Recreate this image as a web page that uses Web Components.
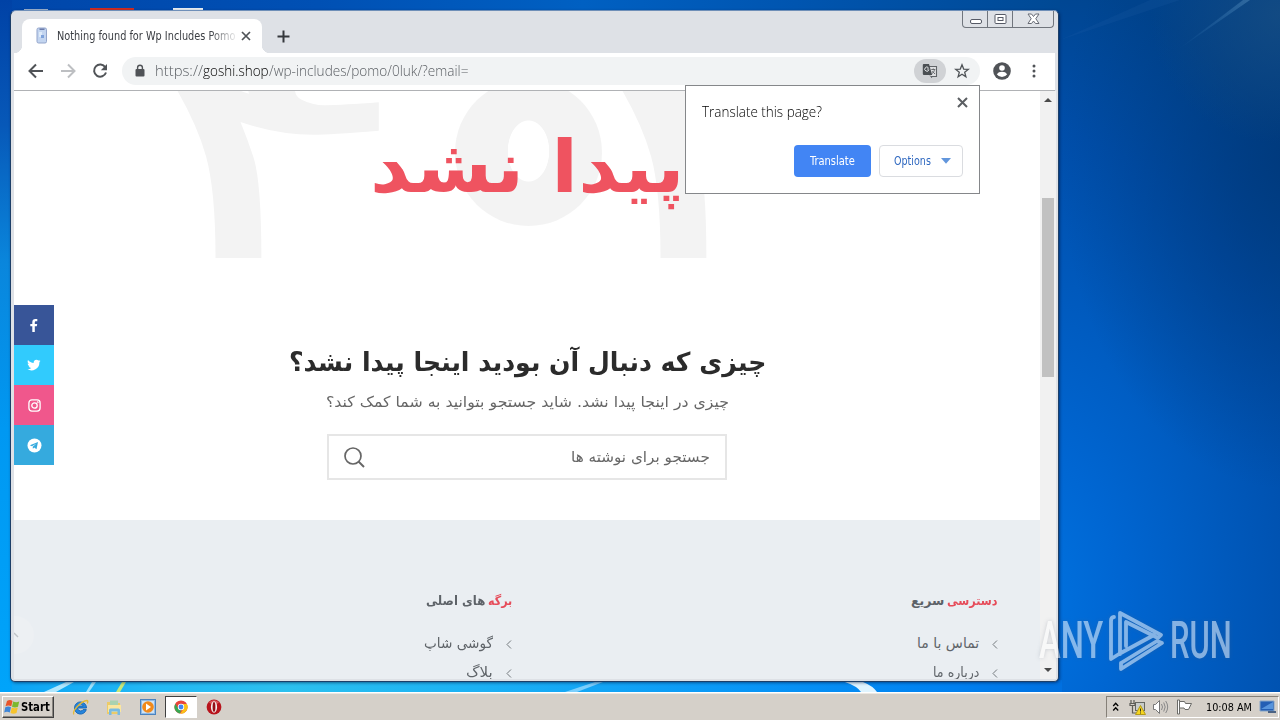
<!DOCTYPE html>
<html lang="en">
<head>
<meta charset="utf-8">
<title>Desktop</title>
<style>
  html, body {
    margin: 0;
    width: 1280px;
    height: 720px;
    overflow: hidden;
    font-family: "DejaVu Sans Condensed", "DejaVu Sans", sans-serif;
  }
</style>
</head>
<body>
<desktop-shell>
  <browser-window>
    <browser-tab slot="tabs" label="Nothing found for Wp Includes Pomo"></browser-tab>
    <address-bar slot="toolbar"></address-bar>
    <shop-page slot="page"></shop-page>
    <translate-bubble slot="bubble"></translate-bubble>
  </browser-window>
  <run-watermark slot="overlay"></run-watermark>
  <task-bar slot="taskbar"></task-bar>
</desktop-shell>

<script>
class DesktopShell extends HTMLElement {
  constructor() {
    super();
    this.attachShadow({ mode: "open" }).innerHTML = `
      <style>
        :host {
          display: grid;
          grid-template-rows: 692px 28px;
          position: relative;
          width: 1280px;
          height: 720px;
          overflow: hidden;
        }
        .wall {
          position: relative;
          overflow: hidden;
          background:
            linear-gradient(180deg, #0042a6 0, #0758b8 18%, #0a86dc 38%, #0098f2 62%, #00a4fa 100%) left / 12px 100% no-repeat,
            linear-gradient(90deg, #0046aa 0, #0050b4 30%, #0060c2 55%, #0055b0 75%, #004994 100%) left top / 1060px 12px no-repeat,
            linear-gradient(90deg, #0aa2f4 0, #22b8f4 14%, #2cc0ee 27%, #1cb2f4 44%, #0a98f6 68%, #0080f0 90%, #0070e0 100%) left bottom / 1062px 12px no-repeat,
            radial-gradient(circle at 100% 2%, rgba(24, 78, 130, .75), rgba(20, 75, 128, 0) 130px),
            radial-gradient(ellipse 230px 330px at 1290px 160px, rgba(0, 55, 120, .8), rgba(0, 60, 130, 0)),
            radial-gradient(ellipse 400px 620px at 1020px 600px, #0074e2 0, #0066d2 25%, #0059bc 52%, #004eaa 76%, #004590 100%);
        }
        svg {
          position: absolute;
          inset: 0;
        }
      </style>
      <div class="wall">
        <svg width="1280" height="692">
          <defs><linearGradient id="ray"><stop stop-color="#3b82c0" stop-opacity="0"/><stop offset="1" stop-color="#5a92c0" stop-opacity=".45"/></linearGradient></defs>
          <path d="M1176 51 1243 0h7z" fill="url(#ray)"/>
          <path d="M1060 40 1150 0h30z" fill="#2f70b0" opacity=".13"/>
          <path d="M24 9h24v3H24z" fill="#9fb4cf"/><path d="M90 8h44v4H90z" fill="#d02c20"/><path d="M173 8h30v4h-30z" fill="#e8eef2"/>
          <path d="m44 692 22-10h8l-18 10z" fill="#d8f6ff" opacity=".8"/>
          <path d="m86 692 6-10h4l-7 10z" fill="#9fe0f8"/><path d="m116 692 6-10h4l-6 10z" fill="#c5e77a"/>
          <path d="m565 692 30-10h8l-26 10z" fill="#a8e0ff" opacity=".7"/>
          <path d="M845 682q12 4 16 10h16q-4-6-14-10z" fill="#dff4ff"/>
        </svg>
        <slot></slot>
        <slot name="overlay"></slot>
      </div>
      <slot name="taskbar"></slot>
    `;
  }
}

class BrowserWindow extends HTMLElement {
  constructor() {
    super();
    this.attachShadow({ mode: "open" }).innerHTML = `
      <style>
        :host {
          position: absolute;
          left: 10px;
          top: 10px;
          width: 1049px;
          height: 672px;
          box-sizing: border-box;
          border: 1px solid #1d3f68;
          border-top-color: #6f8fb8;
          border-radius: 6px 5px 5px 5px;
          background: #dee1e6;
          padding: 0 3px 2px;
          display: flex;
          flex-direction: column;
          box-shadow: 1px 1px 3px rgba(0, 20, 60, .5);
        }
        .strip {
          height: 42px;
          display: flex;
          align-items: flex-end;
          flex: none;
        }
        .strip slot { display: block; }
        .plus { margin: 0 auto 10px 15px; }
        .controls {
          align-self: flex-start;
          margin-right: 1px;
          display: grid;
          grid-template-columns: 24px 25px 41px;
          height: 16px;
          border: 1px solid #70757d;
          border-top: 0;
          border-radius: 0 0 4px 4px;
        }
        .controls span {
          display: grid;
          place-items: center;
        }
        .controls span + span { border-left: 1px solid #70757d; }
        .page {
          flex: 1;
          min-height: 0;
          display: grid;
          grid-template-columns: 1026px 16px;
        }
        .scroll {
          background: #f1f1f1;
          display: flex;
          flex-direction: column;
          align-items: center;
          padding: 6px 0;
        }
        .scroll i {
          width: 12px;
          height: 179px;
          background: #c1c1c1;
          margin: 95px 0 auto;
        }
      </style>
      <div class="strip">
        <slot name="tabs"></slot>
        <svg class="plus" width="13" height="13" fill="none" stroke="#35383c" stroke-width="2"><path d="M6.500 .5v12M.5 6.500h12"/></svg>
        <div class="controls">
          <span><svg width="13" height="15"><rect x="1.500" y="7.500" width="11" height="4" rx="1.500" fill="#fff" stroke="#565a66"/></svg></span>
          <span><svg width="13" height="13" fill="#fff" stroke="#565a66"><rect x="1" y="1.500" width="11" height="9" rx="1"/><rect x="4" y="4.500" width="5" height="3"/></svg></span>
          <span><svg width="13" height="12" fill="#fff" stroke="#666a74"><path d="M1 1h3.500l2 2.500L8.500 1H12L8.800 5.700 12 10.500H8.500L6.500 8l-2 2.500H1l3.200-4.800z"/></svg></span>
        </div>
      </div>
      <slot name="toolbar"></slot>
      <div class="page">
        <slot name="page"></slot>
        <div class="scroll">
          <svg width="8" height="6"><path d="M0 5 4 1l4 4z" fill="#4a4a4a"/></svg>
          <i></i>
          <svg width="8" height="6"><path d="M0 1h8L4 5z" fill="#4a4a4a"/></svg>
        </div>
      </div>
      <slot name="bubble"></slot>
    `;
  }
}

class BrowserTab extends HTMLElement {
  connectedCallback() {
    this.attachShadow({ mode: "open" }).innerHTML = `
      <style>
        :host {
          position: relative;
          display: flex;
          align-items: center;
          width: 240px;
          height: 34px;
          box-sizing: border-box;
          margin-left: 8px;
          padding: 0 11px 0 14px;
          background: #fff;
          border-radius: 8px 8px 0 0;
          font-size: 11.500px;
          color: #3a3d42;
        }
        :host::before, :host::after {
          content: "";
          position: absolute;
          bottom: 0;
          width: 8px;
          height: 8px;
        }
        :host::before { left: -8px; background: radial-gradient(circle at 0 0, transparent 8px, #fff 8.500px); }
        :host::after { right: -8px; background: radial-gradient(circle at 100% 0, transparent 8px, #fff 8.500px); }
        .label {
          margin: 0 6px 0 9px;
          width: 178px;
          flex: none;
          -webkit-mask-image: linear-gradient(90deg, #000 152px, rgba(0, 0, 0, .15) 177px);
        }
      </style>
      <svg width="12" height="18" style="flex:none"><rect x="1" y="1" width="9.500" height="15" rx="1.500" fill="#c3d5f0" stroke="#93a5cb"/><path d="M3.500 1.500h5v1.500h-5z" fill="#6d7cab"/><path d="M3 5h3v5H3z" fill="#deebfa"/><path d="M5 8h3v3H5z" fill="#7fa3dc"/></svg>
      <div class="label"><fit-text w="178">${this.getAttribute("label")}</fit-text></div>
      <svg width="10" height="10" style="flex:none" stroke="#4f5357" stroke-width="1.700"><path d="m1 1 8 8M9 1 1 9"/></svg>
    `;
  }
}

class AddressBar extends HTMLElement {
  constructor() {
    super();
    this.attachShadow({ mode: "open" }).innerHTML = `
      <style>
        :host {
          display: flex;
          align-items: center;
          height: 38px;
          flex: none;
          box-sizing: border-box;
          padding: 0 15px 2px 12px;
          background: #fff;
          border-bottom: 1px solid #b0b2b5;
        }
        svg { flex: none; display: block; }
        .nav {
          display: flex;
          gap: 12px;
          width: 96px;
        }
        .box {
          display: flex;
          align-items: center;
          width: 858px;
          height: 28px;
          box-sizing: border-box;
          padding: 0 10px 0 12px;
          border-radius: 14px;
          background: #f1f3f4;
          font: 300 14.500px "Open Sans", "Noto Sans", sans-serif;
          color: #5c6065;
        }
        .host { color: #000; }
        .url {
          display: flex;
          margin: 0 auto 0 9px;
        }
        .pill {
          display: grid;
          place-items: center;
          width: 32px;
          height: 24px;
          border-radius: 12px;
          background: #d0d2d5;
          margin-right: 8px;
        }
      </style>
      <div class="nav">
        <svg width="20" height="20" fill="none" stroke="#505357" stroke-width="2"><path d="M17 10H4M10 3.500 3.500 10l6.500 6.500"/></svg>
        <svg width="20" height="20" fill="none" stroke="#bdbfc2" stroke-width="2"><path d="M3 10h13M10 3.500l6.500 6.500-6.500 6.500"/></svg>
        <svg width="20" height="20"><path d="M15.300 6.200A6.100 6.100 0 1 0 16 11.500" fill="none" stroke="#505357" stroke-width="2"/><path d="M17 3v6.200h-6.200z" fill="#505357"/></svg>
      </div>
      <div class="box">
        <svg width="12" height="14"><rect x="1.500" y="5" width="9" height="7.500" rx="1" fill="#505357"/><path d="M3.600 5V3.600a2.400 2.400 0 0 1 4.800 0V5" fill="none" stroke="#505357" stroke-width="1.400"/></svg>
        <div class="url"><fit-text w="48">https://</fit-text><fit-text class="host" w="66">goshi.shop</fit-text><fit-text w="199">/wp-includes/pomo/0luk/?email=</fit-text></div>
        <span class="pill">
          <svg width="16" height="16"><path d="M6 3.500h8.500v10H9" fill="#dedfe1" stroke="#606367" stroke-width="1.100"/><path d="M1.800 1H7l3.200 11H2A1.200 1.200 0 0 1 .8 10.800V2A1 1 0 0 1 1.800 1z" fill="#4b4f53"/><path d="M6.900 6H5.100M6.500 4.800A2.100 2.100 0 1 0 6.900 6.700" fill="none" stroke="#e5e7e9"/><path d="M9.300 6.500h4M11.300 5.500v1M12.500 6.500c-.3 2-1 3-2.500 4M10.300 8.200l2.700 2.800M10 15l-2-2.500" fill="none" stroke="#606367" stroke-width=".9"/></svg>
        </span>
        <svg width="16" height="16"><path d="m8 1.800 1.700 4.300 4.600.3-3.600 2.900 1.200 4.500L8 11.300l-3.900 2.500 1.200-4.500-3.600-2.900 4.600-.3z" fill="none" stroke="#4e5256" stroke-width="1.300"/></svg>
      </div>
      <svg width="20" height="20" style="margin-left:12px"><circle cx="10" cy="10" r="8.800" fill="#505357"/><circle cx="10" cy="7" r="2.800" fill="#fff"/><path d="M4.800 13.200q1.600-2.400 5.200-2.400t5.200 2.400q-1.900 2.800-5.200 2.800t-5.200-2.800z" fill="#fff"/></svg>
      <svg width="4" height="14" style="margin-left:20px" fill="#505357"><circle cx="2" cy="2" r="1.500"/><circle cx="2" cy="7" r="1.500"/><circle cx="2" cy="12" r="1.500"/></svg>
    `;
  }
}

class TranslateBubble extends HTMLElement {
  constructor() {
    super();
    this.attachShadow({ mode: "open" }).innerHTML = `
      <style>
        :host {
          position: absolute;
          left: 674px;
          top: 74px;
          width: 295px;
          height: 109px;
          box-sizing: border-box;
          border: 1px solid #85878a;
          background: #fff;
          padding: 0 16px 16px;
          display: flex;
          flex-direction: column;
          justify-content: space-between;
          font-size: 11.500px;
        }
        .top {
          display: flex;
          justify-content: space-between;
          margin-right: -5px;
        }
        .title {
          margin-top: 16px;
          font: 300 14.500px/20px "Open Sans", "Noto Sans", sans-serif;
          color: #000;
        }
        .top svg { margin-top: 11px; }
        .actions {
          display: flex;
          justify-content: flex-end;
          gap: 8px;
        }
        .btn {
          display: flex;
          align-items: center;
          justify-content: center;
          height: 32px;
          box-sizing: border-box;
          border-radius: 4px;
          width: 77px;
          background: #4285f4;
          color: #fff;
        }
        .menu {
          width: 84px;
          gap: 10px;
          padding-left: 2px;
          border: 1px solid #dadce0;
          background: #fff;
          color: #3069c0;
        }
      </style>
      <div class="top">
        <fit-text class="title" w="120">Translate this page?</fit-text>
        <svg width="11" height="11" stroke="#5b5e62" stroke-width="2"><path d="m1 1 9 9M10 1l-9 9"/></svg>
      </div>
      <div class="actions">
        <span class="btn"><fit-text w="45">Translate</fit-text></span>
        <span class="btn menu"><fit-text w="37">Options</fit-text><svg width="10" height="6"><path d="M0 0h10L5 5.800z" fill="#6296dc"/></svg></span>
      </div>
    `;
  }
}

class ShopPage extends HTMLElement {
  constructor() {
    super();
    this.attachShadow({ mode: "open" }).innerHTML = `
      <style>
        :host {
          display: flex;
          flex-direction: column;
          position: relative;
          height: 588px;
          overflow: hidden;
          background: #fff;
          font-family: "DejaVu Sans", sans-serif;
          direction: rtl;
        }
        main {
          position: relative;
          height: 429px;
          flex: none;
          display: flex;
          flex-direction: column;
          align-items: center;
          overflow: hidden;
        }
        h1, h2, p { margin: 0; position: relative; }
        h1 {
          font-size: 72px;
          line-height: 152px;
          color: #ef5360;
          height: 152px;
        }
        h2 {
          margin-top: 101px;
          font-size: 26px;
          line-height: 36px;
          height: 36px;
          color: #2b2b2b;
        }
        p {
          margin-top: 12px;
          font-size: 15px;
          line-height: 20px;
          height: 20px;
          color: #666;
        }
        .search {
          margin-top: 22px;
          width: 400px;
          height: 46px;
          box-sizing: border-box;
          border: 2px solid #e6e6e6;
          display: flex;
          align-items: center;
          justify-content: space-between;
          padding: 0 15px 0 15px;
          font-size: 15px;
          color: #666;
        }
        /* oversized code behind the heading, cropped by the top of the viewport */
        .code {
          position: absolute;
          inset: 0;
          color: #f3f3f3;
          direction: ltr;
        }
        .code span {
          position: absolute;
          top: -105px;
          font-size: 322px;
          line-height: 1;
          transform: scaleX(1.62);
          transform-origin: 0 0;
        }
        .ring {
          position: absolute;
          left: 441px;
          top: -12px;
          width: 147px;
          height: 147px;
          border-radius: 50%;
          background: radial-gradient(ellipse 21px 31px at 50% 49%, transparent 97%, #f3f3f3 100%);
        }
        footer {
          flex: 1;
          min-height: 0;
          box-sizing: border-box;
          background: #eaeef2;
          padding: 71px 42px 0 0;
          display: flex;
        }
        .social {
          position: absolute;
          left: 0;
          top: 214px;
          display: grid;
          grid-auto-rows: 40px;
          width: 40px;
        }
        .social span {
          display: grid;
          place-items: center;
        }
        .edge {
          position: absolute;
          left: -18px;
          top: 525px;
          width: 38px;
          height: 38px;
          border-radius: 50%;
          background: #edf0f3;
        }
        .edge svg { position: absolute; left: 18px; top: 16px; }
      </style>
      <main>
        <div class="code">
          <span style="left:119px">۴</span>
          <div class="ring"></div>
          <span style="left:564px">۴</span>
        </div>
        <h1><fit-text w="315" rtl>پیدا نشد</fit-text></h1>
        <h2><fit-text w="477" rtl>چیزی که دنبال آن بودید اینجا پیدا نشد؟</fit-text></h2>
        <p><fit-text w="403" rtl>چیزی در اینجا پیدا نشد. شاید جستجو بتوانید به شما کمک کند؟</fit-text></p>
        <div class="search">
          <fit-text w="139" rtl>جستجو برای نوشته ها</fit-text>
          <svg width="21" height="21" fill="none" stroke="#666"><circle cx="9" cy="9" r="8" stroke-width="1.700"/><path d="m14.500 14.500 5.500 5.500" stroke-width="1.900"/></svg>
        </div>
      </main>
      <footer>
        <link-column accent="دسترسی" accent-w="51" rest="سریع" rest-w="33">
          <link-item w="62">تماس با ما</link-item>
          <link-item w="46">درباره ما</link-item>
        </link-column>
        <link-column accent="برگه" accent-w="24" rest="های اصلی" rest-w="59">
          <link-item w="69">گوشی شاپ</link-item>
          <link-item w="27">بلاگ</link-item>
        </link-column>
      </footer>
      <div class="social">
        <span style="background:#385598"><svg width="12" height="15"><path d="M4.300 14V8.300H2.300V6h2V4.200C4.300 2 5.500 1 7.300 1h2v2.300H8c-.8 0-1.200.4-1.200 1.100V6h2.400l-.4 2.300h-2V14z" fill="#fff"/></svg></span>
        <span style="background:#31cbfd"><svg width="14" height="12"><path d="M13.500 1.800c-.5.2-1 .4-1.500.4.5-.3.900-.8 1.100-1.400-.5.300-1.100.5-1.700.7A2.800 2.800 0 0 0 6.700 4C4.400 3.900 2.400 2.800 1 1.100.3 2.400.7 4 1.900 4.700c-.5 0-.9-.1-1.200-.3 0 1.300.9 2.500 2.200 2.700-.4.100-.8.100-1.200 0 .4 1.200 1.400 1.900 2.600 2A5.600 5.600 0 0 1 .4 10.300a8 8 0 0 0 12-7.100c.4-.4.800-.9 1.100-1.400z" fill="#fff"/></svg></span>
        <span style="background:#f0578c"><svg width="13" height="13" fill="none" stroke="#fff" stroke-width="1.300"><rect x=".9" y=".9" width="11.200" height="11.200" rx="3"/><circle cx="6.500" cy="6.500" r="2.700"/><circle cx="9.700" cy="3.300" r=".3"/></svg></span>
        <span style="background:#35aade"><svg width="15" height="15"><circle cx="7.500" cy="7.500" r="7" fill="#fff"/><path d="m2.900 7.300 8.100-3.200-1.500 7.200-2.300-1.700-1.300 1.200-.2-2.100 3.800-3.300-4.600 2.800z" fill="#35aade"/></svg></span>
      </div>
      <div class="edge"><svg width="5" height="6" stroke="#bfc3c8" stroke-width="1.500"><path d="m0 1 4 4"/></svg></div>
    `;
  }
}

class LinkColumn extends HTMLElement {
  connectedCallback() {
    const attr = (name) => this.getAttribute(name);
    this.attachShadow({ mode: "open" }).innerHTML = `
      <style>
        :host {
          display: block;
          width: 486px;
          flex: none;
        }
        h3 {
          margin: 0 0 17px;
          height: 20px;
          display: flex;
          gap: 3px;
          font-size: 12.500px;
          line-height: 20px;
          color: #5d6268;
        }
        h3 :first-child { color: #e64c5a; }
      </style>
      <h3><fit-text w="${attr("accent-w")}" rtl>${attr("accent")}</fit-text><fit-text w="${attr("rest-w")}" rtl>${attr("rest")}</fit-text></h3>
      <slot></slot>
    `;
  }
}

class LinkItem extends HTMLElement {
  connectedCallback() {
    this.attachShadow({ mode: "open" }).innerHTML = `
      <style>
        :host {
          display: flex;
          align-items: center;
          gap: 13px;
          height: 29px;
          font-size: 14px;
          color: #5f6469;
        }
        svg { margin-top: 3px; }
      </style>
      <svg width="6" height="9" fill="none" stroke="#73787d"><path d="M5 .5 1 4.500l4 4"/></svg>
      <fit-text w="${this.getAttribute("w")}" rtl><slot></slot></fit-text>
    `;
  }
}

class RunWatermark extends HTMLElement {
  constructor() {
    super();
    this.attachShadow({ mode: "open" }).innerHTML = `
      <style>
        :host {
          position: absolute;
          left: 1039px;
          top: 609px;
          display: flex;
          align-items: center;
          height: 64px;
          font: 500 52px/64px Roboto, sans-serif;
          color: #fff;
          opacity: .52;
          filter: drop-shadow(0 0 2px rgba(90, 100, 120, .5));
        }
      </style>
      <fit-text w="64">ANY</fit-text>
      <svg width="56" height="64" style="margin:0 5px 0 6px" fill="none" stroke="#fff" stroke-width="3.800" stroke-linejoin="round" stroke-linecap="round">
        <path d="M5 8Q2 8 2 12v38l8-5 35-19M11 45V4l41 22-3 3-32-16v24"/>
        <path d="M12 54v6l41-26-5-2-36 22"/>
      </svg>
      <fit-text w="62">RUN</fit-text>
    `;
  }
}

class TaskBar extends HTMLElement {
  constructor() {
    super();
    this.attachShadow({ mode: "open" }).innerHTML = `
      <style>
        :host {
          display: flex;
          align-items: center;
          height: 28px;
          box-sizing: border-box;
          border-top: 1px solid #fff;
          background: #d5d0c9;
          padding: 1px 1px 0 2px;
          font-size: 11px;
          color: #000;
          box-shadow: inset 0 1px #ece8e2;
        }
        svg { display: block; flex: none; }
        .start {
          display: flex;
          align-items: center;
          width: 52px;
          height: 22px;
          box-sizing: border-box;
          padding-left: 1px;
          border: 1px solid;
          border-color: #fff #404040 #404040 #fff;
          box-shadow: inset -1px -1px #8a8680;
          font-weight: bold;
          font-size: 12px;
        }
        .apps {
          display: flex;
          align-items: center;
          margin: 0 auto 0 10px;
        }
        .apps span {
          display: grid;
          place-items: center;
          width: 33.500px;
          height: 22px;
          box-sizing: border-box;
        }
        .apps .active {
          width: 32px;
          background: #fff;
          border: 1px solid;
          border-color: #404040 #fff #fff #404040;
        }
        .tray {
          display: flex;
          align-items: center;
          width: 173px;
          height: 22px;
          box-sizing: border-box;
          border: 1px solid;
          border-color: #858078 #fff #fff #858078;
          padding-left: 5px;
        }
      </style>
      <div class="start">
        <svg width="17" height="16"><path d="M3 2q3-1.800 5.500 0L7.300 7.300Q4.500 5.800 1.500 7.300z" fill="#e8542a"/><path d="M9.200 2.400q3 1.500 6 0L14 7.700q-3 1.500-6 0z" fill="#7cb82f"/><path d="M1.300 8.200q3-1.500 5.700 0l-1.200 5.300q-2.800-1.500-5.600 0z" fill="#3e86d8"/><path d="M7.800 8.600q3 1.500 6 0l-1.300 5.300q-3 1.500-6 0z" fill="#f6c32c"/></svg>
        <fit-text w="29">Start</fit-text>
      </div>
      <div class="apps">
        <span><svg width="17" height="17"><path d="M14.500 9H5.500q.3 3 3.200 3 1.700 0 2.400-1.400h3.200A6 6 0 0 1 2.500 8.800a6 6 0 0 1 12 .2zM5.600 7h5.600Q10.800 5 8.500 5T5.600 7z" fill="#2685dd" stroke="#1264b4" stroke-width=".9"/><path d="M2 15.500C-1 13 9 2 15 1.500q1.500.3.300 3" fill="none" stroke="#e5b932" stroke-width="1.300"/></svg></span>
        <span><svg width="17" height="17"><path d="M1 3h5l1 1h7v11H1z" fill="#eccb68"/><path d="M4 1.500h8v5H4z" fill="#a9d2b0"/><path d="M2 6h13v7H2z" fill="#fbe69e"/><path d="M3 16V11q0-1.500 1.500-1.500h8Q14 9.500 14 11v5h-2.500v-3.500h-6V16z" fill="#78bbe3"/></svg></span>
        <span><svg width="16" height="16"><rect x=".5" y=".5" width="15" height="15" fill="#8fbbe7" stroke="#4b83be"/><rect x="2" y="2" width="12" height="12" fill="#cfe3f5"/><circle cx="8" cy="8" r="5.800" fill="#f18a1c"/><path d="m6 4.500 5 3.500-5 3.500z" fill="#fff"/></svg></span>
        <span class="active"><svg width="14" height="14"><circle cx="7" cy="7" r="6.600" fill="#e8453c"/><path d="M1.300 3.700 4.300 8.600 7 10l-1 3.500A6.600 6.600 0 0 1 1.300 3.700z" fill="#36a852"/><path d="M7 4h5.900A6.600 6.600 0 0 1 6.300 13.600L9.700 8.500z" fill="#fbc116"/><circle cx="7" cy="7" r="3.200" fill="#fff"/><circle cx="7" cy="7" r="2.400" fill="#4285f4"/></svg></span>
        <span><svg width="16" height="16" style="margin-left:2px"><circle cx="8" cy="8" r="7.400" fill="#b8141c"/><path d="M3 3.500Q8-1 13 3.500L8 7z" fill="#d9565a"/><ellipse cx="8" cy="8" rx="3.100" ry="5.700" fill="#f4f1f0"/><ellipse cx="8" cy="8" rx="1.400" ry="4.900" fill="#941016"/></svg></span>
      </div>
      <div class="tray">
        <svg width="8" height="10" fill="none" stroke="#000" stroke-width="1.300"><path d="m1.200 4 2.500-2.700L6.200 4M1.200 8.500l2.500-2.700 2.500 2.700"/></svg>
        <svg width="18" height="17" style="margin-left:9px"><rect x="6.500" y="3.500" width="9" height="8" fill="#c8ccca" stroke="#656863"/><path d="M2 1v4M5 1v4M1 4.500h5v2H1zM3.500 7v7H7" fill="none" stroke="#5d5d58" stroke-width="1.200"/><path d="m11.500 6.500 5 9h-10z" fill="#f6d51e" stroke="#b39a1a"/><path d="M11.500 9.500v3M11.500 13.500v1" stroke="#332"/></svg>
        <svg width="17" height="16" style="margin-left:5px" fill="none" stroke="#777"><path d="M1.500 5.500h2l4-4v13l-4-4h-2z" fill="#fff"/><path d="M9.500 5q2 3 0 6M11.700 3.500q3 4.500 0 9M13.700 2q4 6 0 12" stroke="#888"/></svg>
        <svg width="17" height="16" style="margin-left:7px" stroke="#6b6b67"><path d="M1.500 1h2v14h-2z" fill="#fff"/><path d="M3.500 2.500h5l1 2h6l-3 6H9l-1-1.500H3.500z" fill="#fff"/></svg>
        <fit-text w="46" style="margin-left:13px">10:08 AM</fit-text>
        <svg width="17" height="14" style="margin-left:7px"><path d="M1 1h14v10H1z" fill="#235eb4" stroke="#86a5c7"/><path d="M2 9 14 2v7z" fill="#5794dc"/><path d="M9 12h8" stroke="#4c6383" stroke-width="2"/></svg>
      </div>
    `;
  }
}

// Squeezes or stretches its line of text to the width given in "w".
class FitText extends HTMLElement {
  connectedCallback() {
    const dir = this.hasAttribute("rtl") ? "rtl" : "ltr";
    const width = Number(this.getAttribute("w"));
    this.attachShadow({ mode: "open" }).innerHTML = `
      <style>
        :host {
          display: inline-block;
          direction: ltr;
          flex: none;
          width: ${width}px;
          white-space: nowrap;
        }
        span {
          display: inline-block;
          transform-origin: 0 50%;
        }
      </style>
      <span dir="${dir}"><slot></slot></span>
    `;
    const span = this.shadowRoot.querySelector("span");
    span.style.transform = `scaleX(${width / span.offsetWidth})`;
  }
}

customElements.define("desktop-shell", DesktopShell);
customElements.define("browser-window", BrowserWindow);
customElements.define("browser-tab", BrowserTab);
customElements.define("address-bar", AddressBar);
customElements.define("translate-bubble", TranslateBubble);
customElements.define("shop-page", ShopPage);
customElements.define("link-column", LinkColumn);
customElements.define("link-item", LinkItem);
customElements.define("run-watermark", RunWatermark);
customElements.define("task-bar", TaskBar);
// last, so every line is measured with its final font
customElements.define("fit-text", FitText);
</script>
</body>
</html>
